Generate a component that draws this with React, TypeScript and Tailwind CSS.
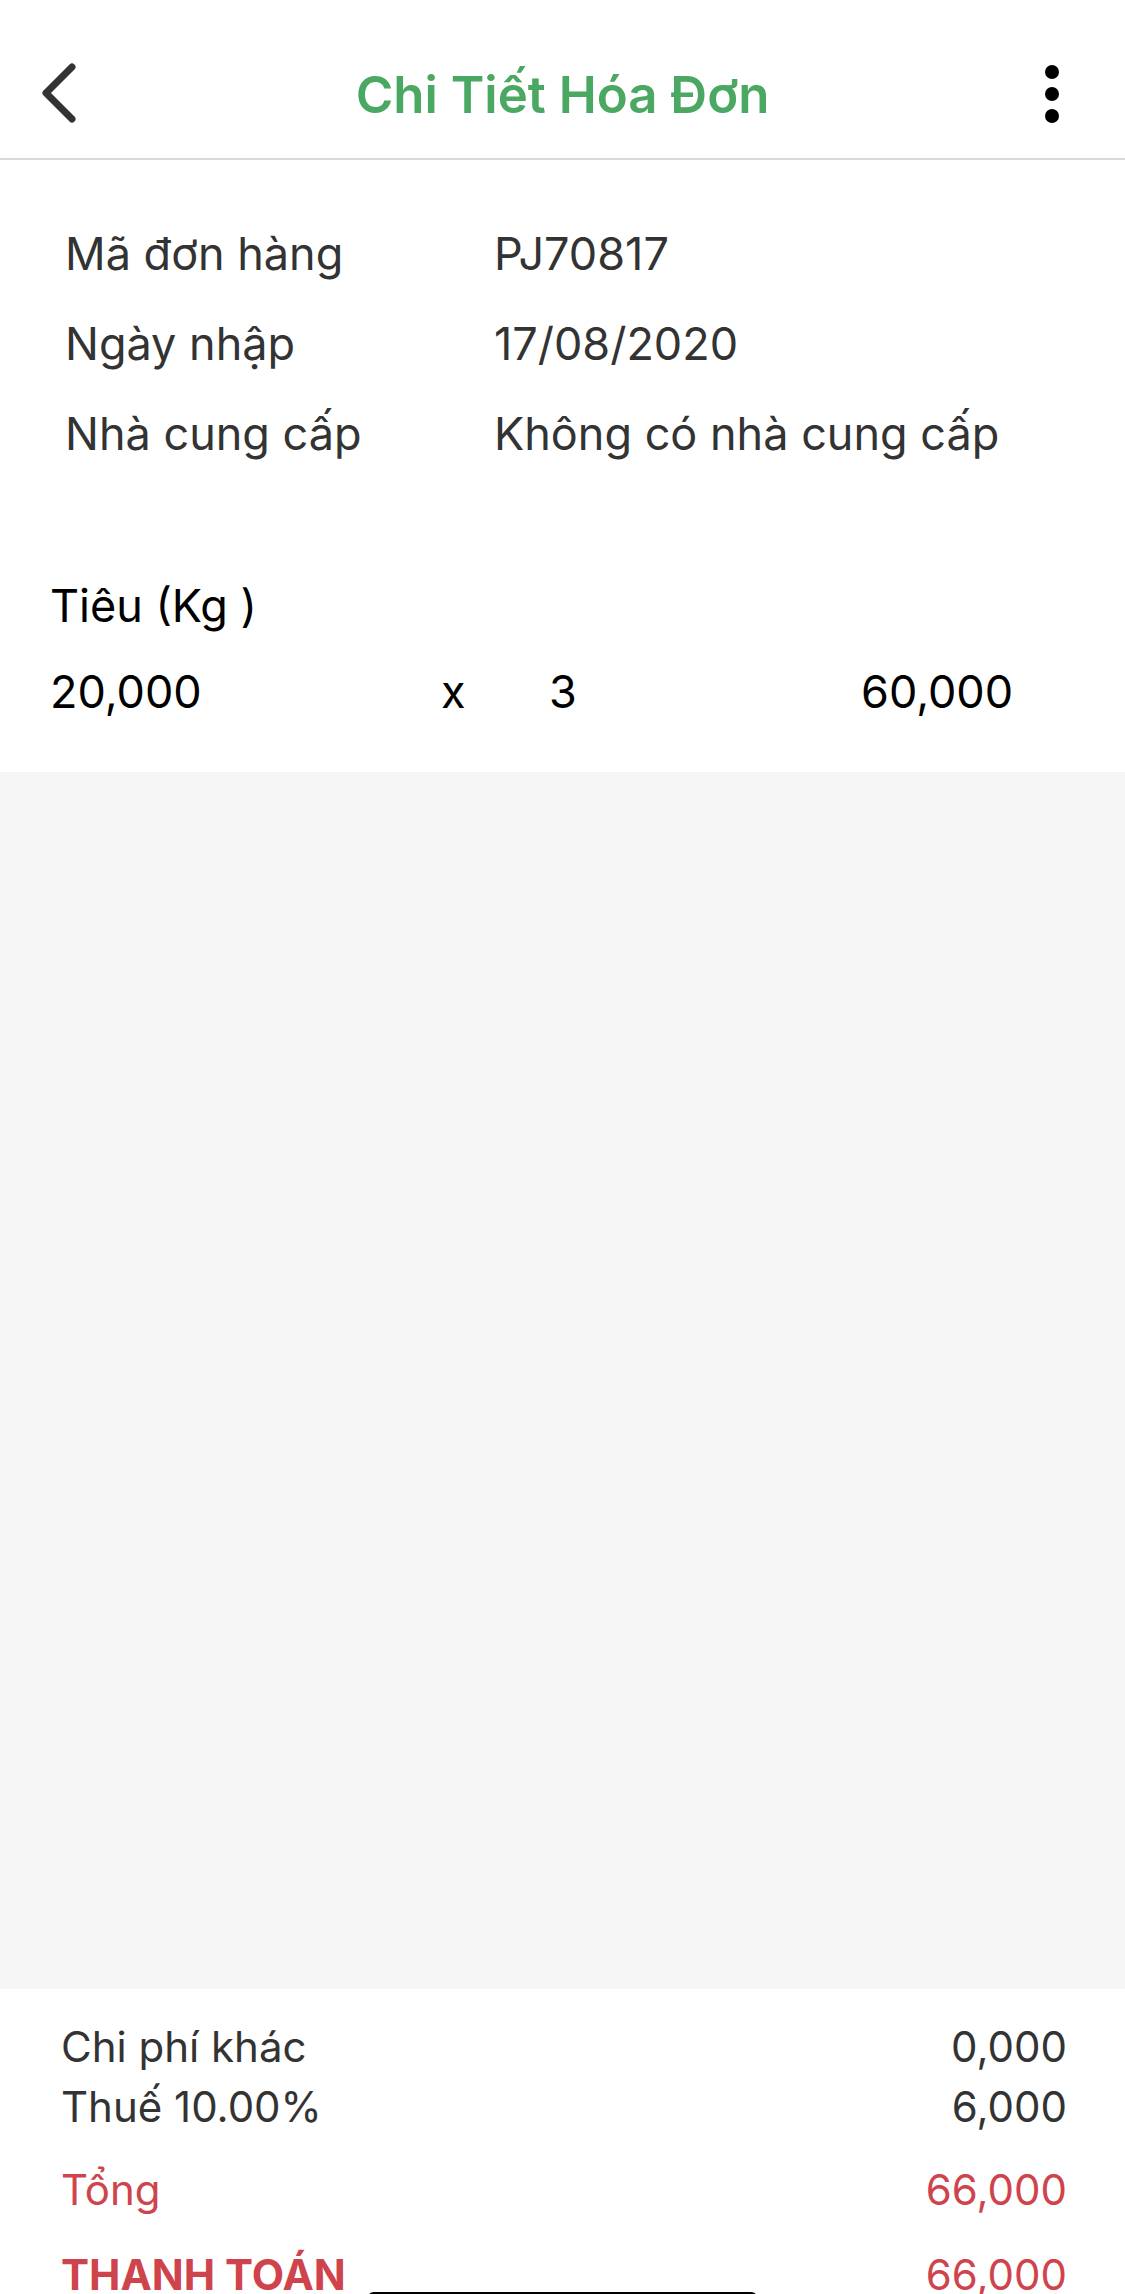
import React from "react";

const font = { fontFamily: "Inter, 'Noto Sans', sans-serif" };

function BackIcon() {
  return (
    <svg width="40" height="62" viewBox="0 0 40 62" fill="none">
      <path
        d="M34 4 L8 30 L34 56"
        stroke="#333333"
        strokeWidth="7"
        strokeLinecap="round"
        strokeLinejoin="round"
      />
    </svg>
  );
}

function MoreIcon() {
  return (
    <svg width="16" height="60" viewBox="0 0 16 60" fill="#000">
      <circle cx="8" cy="8" r="7" />
      <circle cx="8" cy="30" r="7" />
      <circle cx="8" cy="52" r="7" />
    </svg>
  );
}

function InfoRow({ label, value }: { label: string; value: string }) {
  return (
    <div className="grid grid-cols-[429px_1fr] text-[45px] leading-[90px] text-[#333333]">
      <span>{label}</span>
      <span>{value}</span>
    </div>
  );
}

function SumRow({
  label,
  value,
  className,
}: {
  label: string;
  value: string;
  className?: string;
}) {
  return (
    <div className={"flex justify-between text-[42px] leading-[60px] " + (className ?? "")}>
      <span>{label}</span>
      <span>{value}</span>
    </div>
  );
}

export default function App() {
  return (
    <div
      style={font}
      className="relative flex h-[2294px] w-[1125px] flex-col overflow-hidden bg-white"
    >
      <header className="h-[160px] shrink-0 border-b-2 border-[#d9d9d9] pt-[40px]">
        <div className="grid h-[108px] grid-cols-[1fr_auto_1fr] items-center">
          <div className="pl-[38px]">
            <BackIcon />
          </div>
          <h1 className="text-[51px] font-semibold leading-none text-[#4aa863]">
            Chi Tiết Hóa Đơn
          </h1>
          <div className="flex justify-end pr-[65px]">
            <MoreIcon />
          </div>
        </div>
      </header>

      <section className="h-[612px] shrink-0 bg-white">
        <div className="pl-[65px] pt-[49px]">
          <InfoRow label="Mã đơn hàng" value="PJ70817" />
          <InfoRow label="Ngày nhập" value="17/08/2020" />
          <InfoRow label="Nhà cung cấp" value="Không có nhà cung cấp" />
        </div>

        <div className="mt-[97px] pl-[50px] text-[45px] leading-[60px] text-black">
          <div>Tiêu (Kg )</div>
          <div className="mt-[26px] flex">
            <span className="w-[391px]">20,000</span>
            <span className="w-[108px]">x</span>
            <span className="w-[312px]">3</span>
            <span>60,000</span>
          </div>
        </div>
      </section>

      <div className="flex-1 bg-[#f6f6f6]" />

      <section className="h-[305px] shrink-0 overflow-hidden bg-white pl-[61px] pr-[58px] pt-[28px]">
        <SumRow label="Chi phí khác" value="0,000" className="text-[#333333]" />
        <SumRow label="Thuế 10.00%" value="6,000" className="text-[#333333]" />
        <SumRow label="Tổng" value="66,000" className="mt-[23px] text-[#cf444c]" />
        <div className="mt-[25px] flex justify-between text-[42px] leading-[60px] text-[#cf444c]">
          <span className="font-bold">THANH TOÁN</span>
          <span>66,000</span>
        </div>
      </section>

      <div className="absolute left-[367px] top-[2292px] h-[14px] w-[391px] rounded-full bg-black" />
    </div>
  );
}
